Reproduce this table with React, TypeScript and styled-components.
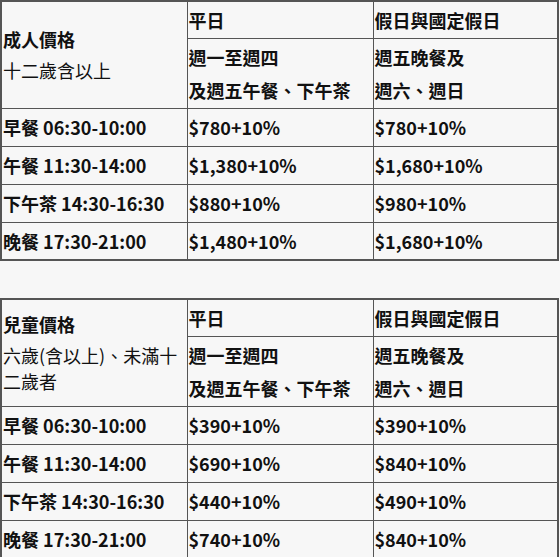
import styled, { createGlobalStyle } from 'styled-components';

const GlobalStyle = createGlobalStyle`
  body {
    margin: 0;
    background: #f7f7f7;
    color: #111;
    font-family: "Noto Sans CJK TC", "Noto Sans", sans-serif;
  }
`;

const Page = styled.div`
  display: flex;
  flex-direction: column;
  gap: 37px;
  width: 560px;
`;

const PriceTable = styled.table`
  border-collapse: collapse;
  table-layout: fixed;
  width: 559px;
  border: 2px solid #555;
`;

const Row = styled.tr<{ $h: number }>`
  height: ${p => p.$h}px;
`;

const Cell = styled.td<{ $light?: boolean }>`
  border: 1px solid #555;
  padding: 0 1px;
  vertical-align: middle;
  font-size: 18px;
  line-height: 26px;
  font-weight: ${p => (p.$light ? 400 : 700)};
  word-break: break-all;
`;

const Stack = styled.div<{ $gap: number }>`
  display: flex;
  flex-direction: column;
  gap: ${p => p.$gap}px;
`;

const Light = styled.div`
  font-weight: 400;
`;

type Meal = { label: string; weekday: string; holiday: string };

type Section = {
  title: string;
  subtitle: string;
  meals: Meal[];
};

const sections: Section[] = [
  {
    title: '成人價格',
    subtitle: '十二歲含以上',
    meals: [
      { label: '早餐 06:30-10:00', weekday: '$780+10%', holiday: '$780+10%' },
      { label: '午餐 11:30-14:00', weekday: '$1,380+10%', holiday: '$1,680+10%' },
      { label: '下午茶 14:30-16:30', weekday: '$880+10%', holiday: '$980+10%' },
      { label: '晚餐 17:30-21:00', weekday: '$1,480+10%', holiday: '$1,680+10%' },
    ],
  },
  {
    title: '兒童價格',
    subtitle: '六歲(含以上)、未滿十二歲者',
    meals: [
      { label: '早餐 06:30-10:00', weekday: '$390+10%', holiday: '$390+10%' },
      { label: '午餐 11:30-14:00', weekday: '$690+10%', holiday: '$840+10%' },
      { label: '下午茶 14:30-16:30', weekday: '$440+10%', holiday: '$490+10%' },
      { label: '晚餐 17:30-21:00', weekday: '$740+10%', holiday: '$840+10%' },
    ],
  },
];

const App = () => {
  return (
    <Page>
      <GlobalStyle />
      {sections.map(section => (
        <PriceTable key={section.title}>
          <colgroup>
            <col style={{ width: 186 }} />
            <col style={{ width: 186 }} />
            <col />
          </colgroup>
          <tbody>
            <Row $h={37}>
              <Cell rowSpan={2}>
                <Stack $gap={5}>
                  <div>{section.title}</div>
                  <Light>{section.subtitle}</Light>
                </Stack>
              </Cell>
              <Cell>平日</Cell>
              <Cell>假日與國定假日</Cell>
            </Row>
            <Row $h={70}>
              <Cell>
                <Stack $gap={7}>
                  <div>週一至週四</div>
                  <div>及週五午餐、下午茶</div>
                </Stack>
              </Cell>
              <Cell>
                <Stack $gap={7}>
                  <div>週五晚餐及</div>
                  <div>週六、週日</div>
                </Stack>
              </Cell>
            </Row>
            {section.meals.map(meal => (
              <Row $h={38} key={meal.label}>
                <Cell>{meal.label}</Cell>
                <Cell>{meal.weekday}</Cell>
                <Cell>{meal.holiday}</Cell>
              </Row>
            ))}
          </tbody>
        </PriceTable>
      ))}
    </Page>
  );
};

export default App;
